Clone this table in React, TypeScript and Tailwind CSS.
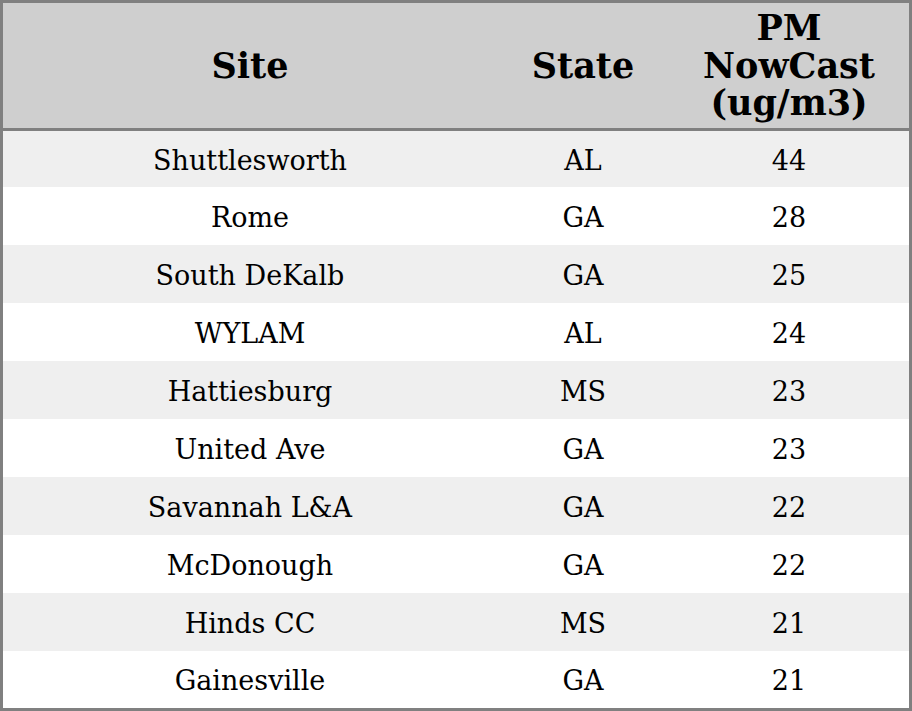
const rows = [
  { site: 'Shuttlesworth', state: 'AL', pm: 44 },
  { site: 'Rome', state: 'GA', pm: 28 },
  { site: 'South DeKalb', state: 'GA', pm: 25 },
  { site: 'WYLAM', state: 'AL', pm: 24 },
  { site: 'Hattiesburg', state: 'MS', pm: 23 },
  { site: 'United Ave', state: 'GA', pm: 23 },
  { site: 'Savannah L&A', state: 'GA', pm: 22 },
  { site: 'McDonough', state: 'GA', pm: 22 },
  { site: 'Hinds CC', state: 'MS', pm: 21 },
  { site: 'Gainesville', state: 'GA', pm: 21 },
];

export default function App() {
  return (
    <div
      className="w-[912px] h-[711px] bg-white border-[3px] border-[#808080] flex flex-col text-black"
      style={{ fontFamily: '"DejaVu Serif", serif' }}
    >
      {/* Header */}
      <div className="h-[128px] shrink-0 bg-[#cfcfcf] border-b-[3px] border-[#808080] grid grid-cols-[494px_172px_240px] items-center text-center font-bold text-[35px] leading-[37.5px]">
        <div>Site</div>
        <div>State</div>
        <div>
          PM
          <br />
          NowCast
          <br />
          (ug/m3)
        </div>
      </div>

      {/* Body rows */}
      {rows.map((r, i) => (
        <div
          key={r.site}
          className={
            'grid grid-cols-[494px_172px_240px] items-center text-center text-[27px] pt-[4px] ' +
            (i % 2 === 0 ? 'bg-[#efefef] ' : 'bg-white ') +
            (i === 0 ? 'h-[56px]' : i === rows.length - 1 ? 'h-[57px]' : 'h-[58px]')
          }
        >
          <div>{r.site}</div>
          <div>{r.state}</div>
          <div>{r.pm}</div>
        </div>
      ))}
    </div>
  );
}
